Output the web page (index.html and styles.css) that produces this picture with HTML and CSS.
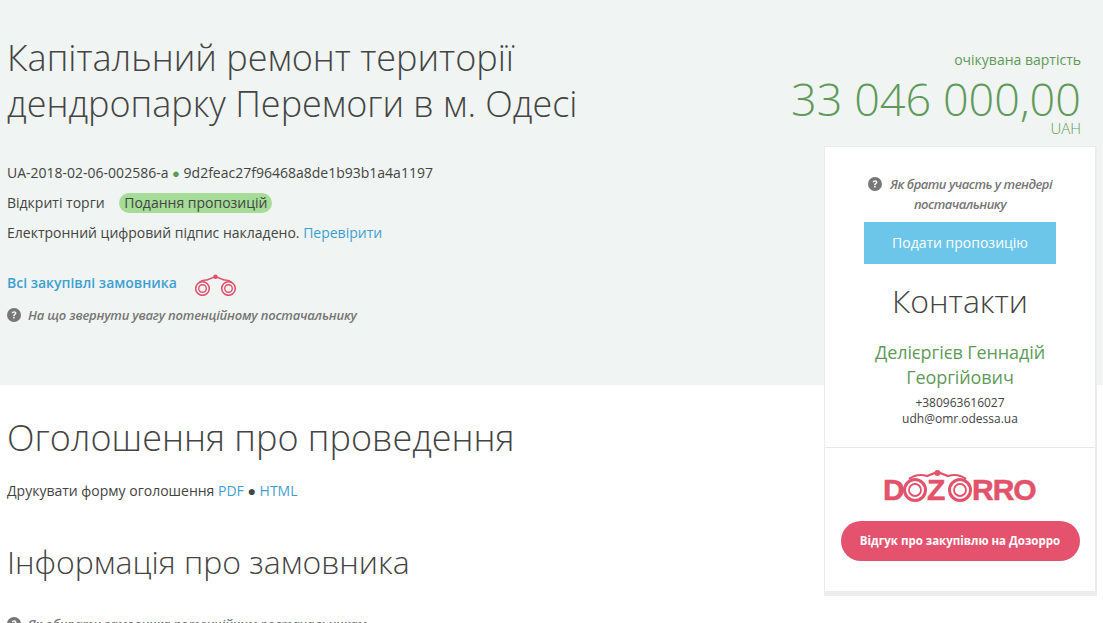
FILE: index.html
```html
<!DOCTYPE html>
<html lang="uk">
<head>
    <meta charset="UTF-8">
    <title>Капітальний ремонт території дендропарку Перемоги в м. Одесі</title>
    <link rel="stylesheet" href="styles.css">
</head>
<body>
    <div class="page">
        <div class="band">
            <div class="band-left">
                <h1>Капітальний ремонт території дендропарку Перемоги в м. Одесі</h1>
                <div class="meta-row">UA-2018-02-06-002586-a <span class="dot">●</span> 9d2feac27f96468a8de1b93b1a4a1197</div>
                <div class="meta-row">Відкриті торги <span class="status">Подання пропозицій</span></div>
                <div class="meta-row">Електронний цифровий підпис накладено. <a href="#">Перевірити</a></div>
                <div class="buyer-row">
                    <a href="#" class="buyer-link">Всі закупівлі замовника</a>
                    <svg class="binoculars" width="42" height="22" viewBox="0 0 42 22" fill="none" stroke="#e0526c">
                        <circle cx="7.500" cy="14.500" r="6.800" stroke-width="1.600"/>
                        <circle cx="7.500" cy="14.500" r="3.800" stroke-width="1.400"/>
                        <circle cx="33.500" cy="14.500" r="6.800" stroke-width="1.600"/>
                        <circle cx="33.500" cy="14.500" r="3.800" stroke-width="1.400"/>
                        <path d="M4 8.500 Q7 5.500 12 6 L20.500 2.500 L29 6 Q34 5.500 37 8.500" stroke-width="1.600"/>
                        <circle cx="20.500" cy="2.800" r="2.200" fill="#e0526c" stroke="none"/>
                    </svg>
                </div>
                <div class="hint">
                    <svg class="hint-icon" viewBox="0 0 24 24"><circle cx="12" cy="12" r="12" fill="#777"/><path d="M8 9.200c.2-2.400 2-3.700 4.200-3.700 2.300 0 4 1.400 4 3.400 0 2.800-3.200 2.800-3.200 5.100h-2.500c0-3.500 3-3.500 3-5 0-.8-.6-1.300-1.400-1.300-.9 0-1.400.6-1.500 1.500z M10.500 15.500h2.600v2.700h-2.600z" fill="#f0f4f2"/></svg>
                    <em>На що звернути увагу потенційному постачальнику</em>
                </div>
            </div>
            <div class="price">
                <div class="price-label">очікувана вартість</div>
                <div class="price-value">33 046 000,00</div>
                <div class="price-currency">UAH</div>
            </div>
        </div>

        <div class="content">
            <h2 class="notice-title">Оголошення про проведення</h2>
            <p class="print-row">Друкувати форму оголошення <a href="#">PDF</a> ● <a href="#">HTML</a></p>
            <h2 class="buyer-title">Інформація про замовника</h2>
            <div class="hint">
                <svg class="hint-icon" viewBox="0 0 24 24"><circle cx="12" cy="12" r="12" fill="#777"/><path d="M8 9.200c.2-2.400 2-3.700 4.200-3.700 2.300 0 4 1.400 4 3.400 0 2.800-3.200 2.800-3.200 5.100h-2.500c0-3.500 3-3.500 3-5 0-.8-.6-1.300-1.400-1.300-.9 0-1.400.6-1.500 1.500z M10.500 15.500h2.600v2.700h-2.600z" fill="#fff"/></svg>
                <em>Як обирати замовника потенційним постачальникам</em>
            </div>
        </div>

        <div class="sidebar">
            <div class="side-top">
                <div class="side-hint">
                    <svg class="hint-icon" viewBox="0 0 24 24"><circle cx="12" cy="12" r="12" fill="#777"/><path d="M8 9.200c.2-2.400 2-3.700 4.200-3.700 2.300 0 4 1.400 4 3.400 0 2.800-3.200 2.800-3.200 5.100h-2.500c0-3.500 3-3.500 3-5 0-.8-.6-1.300-1.400-1.300-.9 0-1.400.6-1.500 1.500z M10.500 15.500h2.600v2.700h-2.600z" fill="#fff"/></svg>
                    <em>Як брати участь у тендері постачальнику</em>
                </div>
                <a href="#" class="btn-offer">Подати пропозицію</a>
                <div class="contacts-title">Контакти</div>
                <div class="contact-name">Делієргієв Геннадій Георгійович</div>
                <div class="contact-line">+380963616027</div>
                <div class="contact-line">udh@omr.odessa.ua</div>
            </div>
            <div class="side-bottom">
                <svg class="dozorro-logo" width="154" height="38" viewBox="0 0 154 38" fill="none" stroke="#e2526b">
                    <text x="0" y="31" class="logo-text">D</text>
                    <circle cx="32" cy="21" r="10.500" stroke-width="3"/>
                    <circle cx="32" cy="21" r="6" stroke-width="1.800"/>
                    <text x="44" y="31" class="logo-text">Z</text>
                    <circle cx="77" cy="21" r="10.500" stroke-width="3"/>
                    <circle cx="77" cy="21" r="6" stroke-width="1.800"/>
                    <path d="M26 10 Q34 4 44 7 L54.500 3 L65 7 Q75 4 83 10" stroke-width="2.200"/>
                    <circle cx="54.500" cy="4" r="3" fill="#e2526b" stroke="none"/>
                    <text x="89" y="31" class="logo-text">RRO</text>
                </svg>
                <a href="#" class="btn-review">Відгук про закупівлю на Дозорро</a>
            </div>
        </div>
    </div>
</body>
</html>
```

FILE: styles.css
```css
html, body {
    margin: 0;
    padding: 0;
}
body {
    font-family: "Open Sans", sans-serif;
    font-size: 14px;
    color: #444;
    background-color: #fff;
    height: 623px;
    overflow: hidden;
}
a {
    color: #3f9fd3;
    text-decoration: none;
}
.page {
    position: relative;
}
.band {
    display: flex;
    justify-content: space-between;
    height: 385px;
    padding: 0 22px 0 7px;
    box-sizing: border-box;
    background-color: #f0f4f2;
}
h1 {
    width: 620px;
    margin: 35px 0 31px;
    font-size: 36px;
    font-weight: 300;
    line-height: 46px;
    color: #444;
}
.meta-row {
    height: 30px;
    line-height: 30px;
    white-space: nowrap;
}
.dot {
    color: #5a9a55;
    font-size: 13px;
}
.status {
    display: inline-block;
    margin-left: 11px;
    padding: 0 5px;
    height: 20px;
    line-height: 20px;
    border-radius: 10px;
    background-color: #a4dc98;
}
.buyer-row {
    display: flex;
    align-items: center;
    gap: 18px;
    margin-top: 19px;
    height: 30px;
}
.buyer-link {
    font-weight: 600;
}
.binoculars {
    margin-top: 5px;
}
.hint {
    display: flex;
    align-items: center;
    gap: 7px;
    margin-top: 8px;
    height: 20px;
    font-size: 13px;
    font-weight: 600;
    color: #777;
    white-space: nowrap;
}
.hint em {
    letter-spacing: -0.2px;
}
.hint-icon {
    width: 14px;
    height: 14px;
    flex: none;
}
.price {
    padding-top: 49px;
    text-align: right;
    color: #5f9a5a;
}
.price-label {
    line-height: 22px;
}
.price-value {
    margin-top: 6px;
    font-size: 45px;
    font-weight: 300;
    line-height: 44px;
    white-space: nowrap;
}
.price-currency {
    font-size: 15px;
    font-weight: 300;
    line-height: 14px;
}
.content {
    padding-left: 7px;
}
.content h2 {
    margin: 0;
    font-weight: 300;
    color: #444;
}
.notice-title {
    padding-top: 30px;
    font-size: 36px;
    line-height: 46px;
}
.print-row {
    margin: 18px 0 0;
    line-height: 24px;
}
.content .buyer-title {
    margin-top: 37px;
    font-size: 32px;
    line-height: 44px;
}
.content .hint {
    margin-top: 30px;
}
.sidebar {
    position: absolute;
    left: 824px;
    top: 146px;
    width: 273px;
    height: 450px;
    box-sizing: border-box;
    background-color: #fff;
    border: 2px solid #ececec;
    border-top-width: 1px;
    border-left-width: 1px;
    border-bottom-width: 5px;
    text-align: center;
}
.side-top {
    height: 301px;
    padding-top: 27px;
    box-sizing: border-box;
    border-bottom: 1px solid #e8e8e8;
}
.side-hint {
    width: 210px;
    margin: 0 auto;
    font-size: 13px;
    font-weight: 600;
    line-height: 20px;
    color: #777;
}
.side-hint .hint-icon {
    margin-right: 5px;
    vertical-align: -2px;
}
.side-hint em {
    letter-spacing: -0.5px;
}
.btn-offer {
    display: block;
    width: 192px;
    height: 42px;
    margin: 8px auto 0;
    line-height: 42px;
    color: #fff;
    background-color: #6cc6ea;
}
.contacts-title {
    margin-top: 15px;
    font-size: 32px;
    font-weight: 300;
    line-height: 44px;
    color: #444;
}
.contact-name {
    width: 230px;
    margin: 17px auto 0;
    font-size: 18px;
    line-height: 25px;
    letter-spacing: -0.1px;
    color: #5f9a5a;
}
.contact-line {
    font-size: 12px;
    line-height: 16px;
    color: #444;
}
.contact-name + .contact-line {
    margin-top: 5px;
}
.dozorro-logo {
    display: block;
    margin: 21px auto 0;
}
.logo-text {
    font-family: "Liberation Sans", sans-serif;
    font-size: 30px;
    font-weight: 700;
    letter-spacing: -1px;
    fill: #e2526b;
    stroke: #e2526b;
    stroke-width: 0.5px;
}
.btn-review {
    display: block;
    width: 239px;
    height: 40px;
    margin: 14px auto 0;
    font-size: 11.5px;
    font-weight: 700;
    line-height: 40px;
    color: #fff;
    border-radius: 20px;
    background-color: #e5526d;
}
```
